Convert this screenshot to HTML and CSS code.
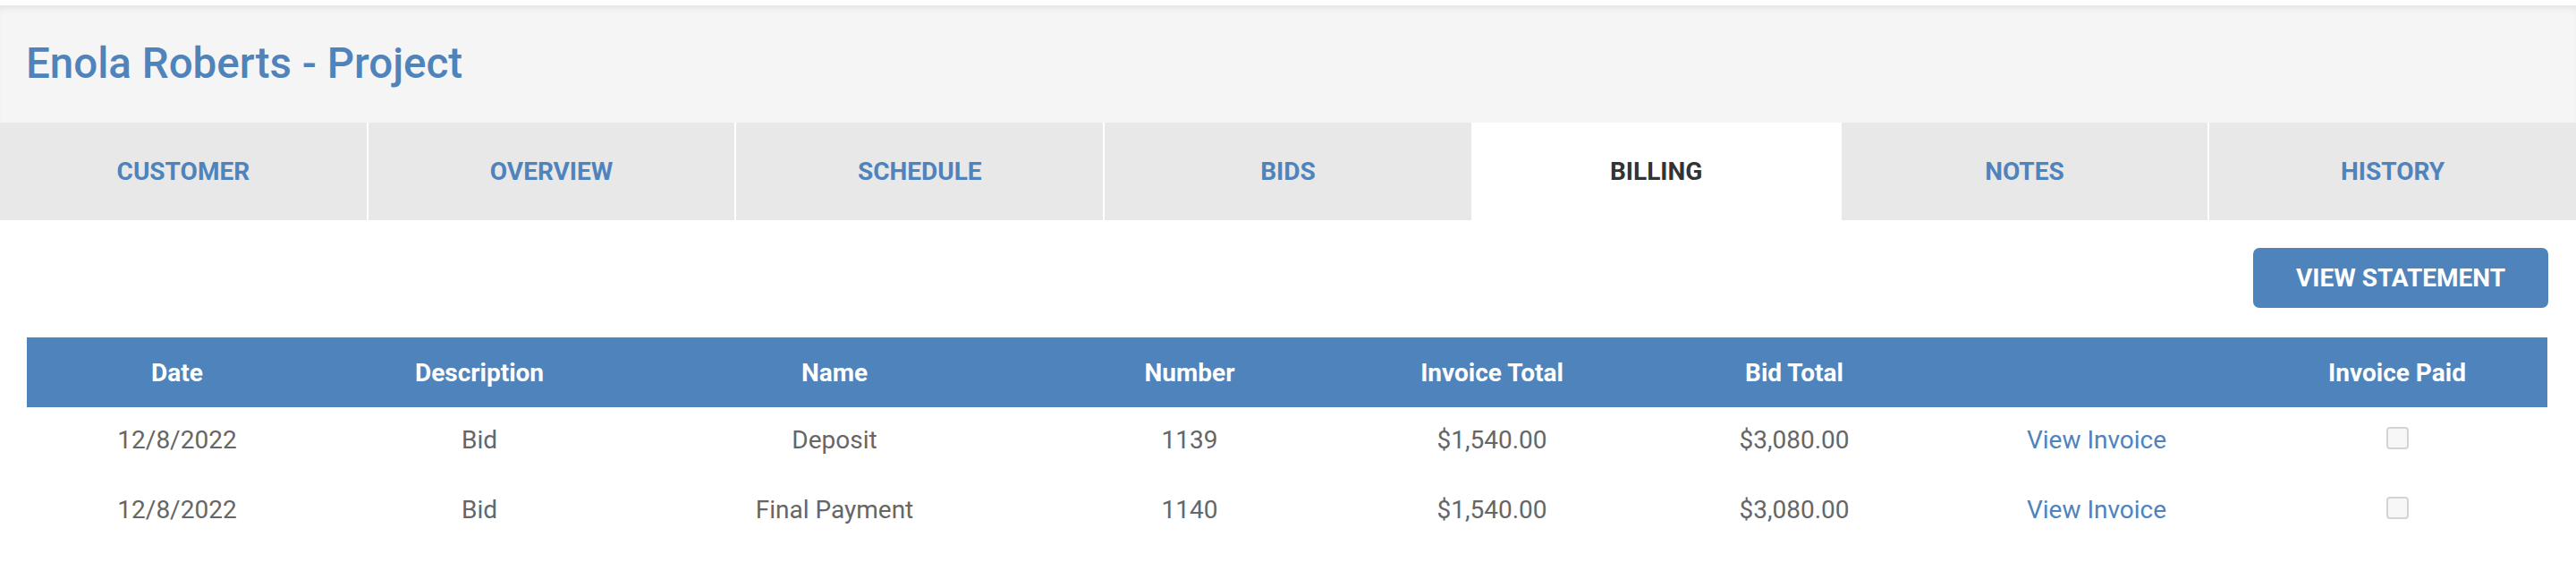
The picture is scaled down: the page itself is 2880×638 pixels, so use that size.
FILE: index.html
```html
<!DOCTYPE html>
<html lang="en">
<head>
<meta charset="utf-8">
<title>Enola Roberts - Project</title>
<link rel="stylesheet" href="styles.css">
</head>
<body>
<header class="page-header">
  <h1 class="page-title">Enola Roberts - Project</h1>
</header>
<nav class="tabs">
  <a class="tab">Customer</a>
  <a class="tab">Overview</a>
  <a class="tab">Schedule</a>
  <a class="tab">Bids</a>
  <a class="tab tab-active">Billing</a>
  <a class="tab">Notes</a>
  <a class="tab">History</a>
</nav>
<main class="content">
  <div class="toolbar">
    <button class="btn-primary">View Statement</button>
  </div>
  <table class="billing">
    <colgroup>
      <col class="c-date"><col class="c-desc"><col class="c-name"><col class="c-num">
      <col class="c-inv"><col class="c-bid"><col class="c-link"><col class="c-paid">
    </colgroup>
    <thead>
      <tr>
        <th>Date</th><th>Description</th><th>Name</th><th>Number</th>
        <th>Invoice Total</th><th>Bid Total</th><th></th><th>Invoice Paid</th>
      </tr>
    </thead>
    <tbody>
      <tr>
        <td>12/8/2022</td><td>Bid</td><td>Deposit</td><td>1139</td>
        <td>$1,540.00</td><td>$3,080.00</td><td><a class="link">View Invoice</a></td>
        <td><input class="check" type="checkbox"></td>
      </tr>
      <tr>
        <td>12/8/2022</td><td>Bid</td><td>Final Payment</td><td>1140</td>
        <td>$1,540.00</td><td>$3,080.00</td><td><a class="link">View Invoice</a></td>
        <td><input class="check" type="checkbox"></td>
      </tr>
    </tbody>
  </table>
</main>
</body>
</html>
```
FILE: styles.css
```css
html, body {
  margin: 0;
  padding: 0;
  background: #ffffff;
  font-family: Roboto, "Liberation Sans", Arial, sans-serif;
}

.page-header {
  margin-top: 6px;
  height: 131px;
  background: #f5f5f5;
  box-shadow: inset 0 7px 8px -5px rgba(0, 0, 0, 0.09);
  display: flex;
  align-items: center;
  padding-left: 29px;
  box-sizing: border-box;
}

.page-title {
  margin: 0;
  font-size: 47.5px;
  font-weight: 500;
  color: #4f83bc;
  line-height: 1;
}

.tabs {
  display: grid;
  grid-template-columns: repeat(7, 1fr);
  column-gap: 2px;
  height: 109px;
}

.tab {
  display: flex;
  align-items: center;
  justify-content: center;
  background: #e8e8e8;
  color: #4f83bc;
  font-size: 28px;
  font-weight: 700;
  text-transform: uppercase;
  cursor: pointer;
}

.tab-active {
  background: #ffffff;
  color: #333333;
}

.content {
  padding: 31px 30px 0 30px;
}

.toolbar {
  display: flex;
  justify-content: flex-end;
  margin-bottom: 33px;
  padding-right: 1px;
}

.btn-primary {
  height: 67px;
  width: 330px;
  border: none;
  border-radius: 7px;
  background: #4f83bc;
  color: #ffffff;
  font-family: Roboto, "Liberation Sans", Arial, sans-serif;
  font-size: 28px;
  font-weight: 700;
  text-transform: uppercase;
  cursor: pointer;
}

.billing {
  border-collapse: collapse;
  table-layout: fixed;
  width: 2818px;
}

.c-date { width: 336px; }
.c-desc { width: 340px; }
.c-name { width: 454px; }
.c-num { width: 340px; }
.c-inv { width: 336px; }
.c-bid { width: 340px; }
.c-link { width: 336px; }
.c-paid { width: 336px; }

.billing th {
  height: 78px;
  padding: 0;
  background: #4f83bc;
  color: #ffffff;
  font-size: 28px;
  font-weight: 700;
  text-align: center;
}

.billing td {
  box-sizing: border-box;
  height: 78px;
  padding: 0 0 6px 0;
  color: #666666;
  font-size: 28px;
  font-weight: 400;
  text-align: center;
}

.link {
  color: #4f83bc;
  cursor: pointer;
}

.check {
  appearance: none;
  -webkit-appearance: none;
  width: 25px;
  height: 25px;
  margin: 0 0 6px 0;
  vertical-align: middle;
  border: 2px solid #d4d4d4;
  border-radius: 4px;
  background: #f7f7f7;
  box-sizing: border-box;
}
```
